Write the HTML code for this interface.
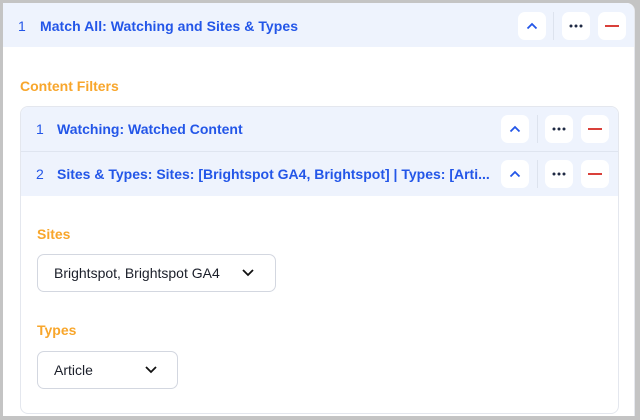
<!DOCTYPE html>
<html><head><style>
*{box-sizing:border-box;margin:0;padding:0}
body{width:640px;height:420px;background:#c4c4c4;font-family:"Liberation Sans",sans-serif;position:relative;overflow:hidden}
.card{position:absolute;left:3px;top:3px;width:632px;height:413px;background:#fff;border-radius:0 8px 0 0;border-right:1px solid #e6e8ee}
.hdr{position:absolute;left:0;top:0;width:631px;height:44px;background:#eef3fd;border-radius:0 8px 0 0}
.t{position:absolute;color:#2356e8;font-size:14px;font-weight:bold;white-space:nowrap}
.n{position:absolute;color:#2356e8;font-size:14px}
.btn{position:absolute;width:28px;height:28px;background:#fff;border-radius:7px}
.btn svg{position:absolute;left:0;top:0}
.div{position:absolute;width:1px;height:28px;background:#dde3ee}
.lbl{position:absolute;color:#f8a62b;font-size:14px;font-weight:bold}
.panel{position:absolute;left:17px;top:103px;width:599px;height:308px;border:1px solid #e4e7ee;border-radius:8px;overflow:hidden}
.row{position:absolute;left:0;width:597px;height:44px;background:#eef3fd}
.sel{position:absolute;border:1px solid #d3d7e0;border-radius:7px;background:#fff;font-size:14px;color:#1b1f2a}
</style></head><body>
<div class="card">
 <div class="hdr">
  <span class="n" style="left:15px;top:15px">1</span>
  <span class="t" style="left:37px;top:15px;letter-spacing:0.05px">Match All: Watching and Sites &amp; Types</span>
  <div class="btn" style="left:515px;top:9px"><svg width="28" height="28"><path d="M9.5 16.5 L14 12 L18.5 16.5" fill="none" stroke="#2356e8" stroke-width="1.8"/></svg></div>
  <div class="div" style="left:550px;top:9px"></div>
  <div class="btn" style="left:559px;top:9px"><svg width="28" height="28"><circle cx="9" cy="14" r="1.5" fill="#1f2a44"/><circle cx="14" cy="14" r="1.5" fill="#1f2a44"/><circle cx="19" cy="14" r="1.5" fill="#1f2a44"/></svg></div>
  <div class="btn" style="left:595px;top:9px"><svg width="28" height="28"><path d="M7 14 H21" stroke="#d9403a" stroke-width="2"/></svg></div>
 </div>
 <span class="lbl" style="left:17px;top:75px">Content Filters</span>
 <div class="panel">
  <div class="row" style="top:0">
   <span class="n" style="left:15px;top:14px">1</span>
   <span class="t" style="left:36px;top:14px">Watching: Watched Content</span>
   <div class="btn" style="left:480px;top:8px"><svg width="28" height="28"><path d="M9.5 16.5 L14 12 L18.5 16.5" fill="none" stroke="#2356e8" stroke-width="1.8"/></svg></div>
   <div class="div" style="left:516px;top:8px"></div>
   <div class="btn" style="left:524px;top:8px"><svg width="28" height="28"><circle cx="9" cy="14" r="1.5" fill="#1f2a44"/><circle cx="14" cy="14" r="1.5" fill="#1f2a44"/><circle cx="19" cy="14" r="1.5" fill="#1f2a44"/></svg></div>
   <div class="btn" style="left:560px;top:8px"><svg width="28" height="28"><path d="M7 14 H21" stroke="#d9403a" stroke-width="2"/></svg></div>
  </div>
  <div style="position:absolute;left:0;top:44px;width:597px;height:1px;background:#dfe5f0"></div>
  <div class="row" style="top:45px">
   <span class="n" style="left:15px;top:14px">2</span>
   <span class="t" style="left:36px;top:14px">Sites &amp; Types: Sites: [Brightspot GA4, Brightspot] | Types: [Arti...</span>
   <div class="btn" style="left:480px;top:8px"><svg width="28" height="28"><path d="M9.5 16.5 L14 12 L18.5 16.5" fill="none" stroke="#2356e8" stroke-width="1.8"/></svg></div>
   <div class="div" style="left:516px;top:8px"></div>
   <div class="btn" style="left:524px;top:8px"><svg width="28" height="28"><circle cx="9" cy="14" r="1.5" fill="#1f2a44"/><circle cx="14" cy="14" r="1.5" fill="#1f2a44"/><circle cx="19" cy="14" r="1.5" fill="#1f2a44"/></svg></div>
   <div class="btn" style="left:560px;top:8px"><svg width="28" height="28"><path d="M7 14 H21" stroke="#d9403a" stroke-width="2"/></svg></div>
  </div>
  <span class="lbl" style="left:16px;top:119px">Sites</span>
  <div class="sel" style="left:16px;top:147px;width:239px;height:38px"><span style="position:absolute;left:16px;top:10px">Brightspot, Brightspot GA4</span><svg style="position:absolute;left:203px;top:10px" width="14" height="14"><path d="M2 5 L7 10 L12 5" fill="none" stroke="#111" stroke-width="1.8"/></svg></div>
  <span class="lbl" style="left:16px;top:215px">Types</span>
  <div class="sel" style="left:16px;top:244px;width:141px;height:38px"><span style="position:absolute;left:16px;top:10px">Article</span><svg style="position:absolute;left:106px;top:10px" width="14" height="14"><path d="M2 5 L7 10 L12 5" fill="none" stroke="#111" stroke-width="1.8"/></svg></div>
 </div>
</div>
</body></html>
